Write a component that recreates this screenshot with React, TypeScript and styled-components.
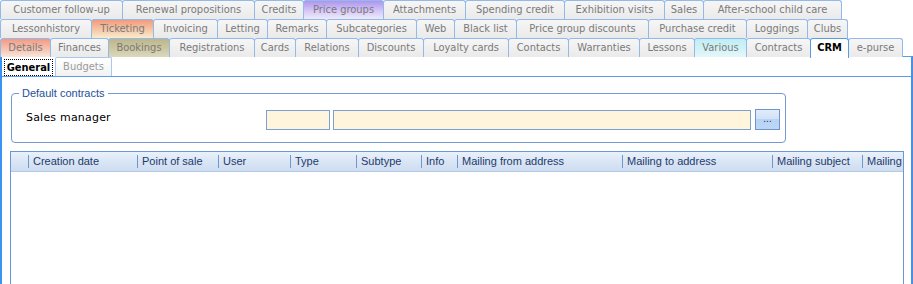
import React from "react";
import styled, { createGlobalStyle, css } from "styled-components";

const Global = createGlobalStyle`
  html, body { margin: 0; padding: 0; background: #ffffff; }
  body { font-family: "Liberation Sans", Arial, sans-serif; }
  * { box-sizing: border-box; }
`;

type Tone = "plain" | "purple" | "orange" | "salmon" | "olive" | "cyan";

const tones: Record<Tone, string> = {
  plain: "linear-gradient(#f6f6f6, #eaeaea)",
  purple: "linear-gradient(#ae94ef, #d8ccf6 60%, #efeafb)",
  orange: "linear-gradient(#f29a7e, #f6c7a6 55%, #f8ecd0)",
  salmon: "linear-gradient(#f19a84, #f6c6b4 60%, #f8e6dc)",
  olive: "linear-gradient(#bdb68c, #cfc9a4 60%, #dcd8bd)",
  cyan: "linear-gradient(#bfeef3, #d4f3f6 60%, #e6f7f9)",
};

const Screen = styled.div`
  width: 913px;
  height: 284px;
  overflow: hidden;
  display: flex;
  flex-direction: column;
  background: #ffffff;
`;

const TabRow = styled.div<{ $front?: boolean }>`
  display: flex;
  height: 19px;
  flex: none;
  position: relative;
  z-index: ${(p) => (p.$front ? 2 : "auto")};
`;

const Tab = styled.div<{ $w: number; $tone?: Tone; $active?: boolean }>`
  width: ${(p) => p.$w}px;
  flex: none;
  height: 19px;
  margin-left: -1px;
  &:first-child { margin-left: 0; }
  border: 1px solid #93b9e8;
  border-bottom: none;
  border-radius: 3px 3px 0 0;
  background: ${(p) => tones[p.$tone ?? "plain"]};
  color: #7a7a7a;
  font-family: "DejaVu Sans Condensed", "Liberation Sans", sans-serif;
  font-size: 11px;
  line-height: 18px;
  text-align: center;
  white-space: nowrap;
  overflow: hidden;
  ${(p) =>
    p.$active &&
    css`
      background: #ffffff;
      color: #000000;
      font-weight: bold;
      height: 20px;
      position: relative;
      z-index: 2;
      border-color: #5a9be6;
    `}
`;

const Panel = styled.div`
  flex: 1;
  margin-top: -1px;
  border-top: 1px solid #5d9ce8;
  border-left: 2px solid #3a92f2;
  border-right: 2px solid #4a90e2;
  display: flex;
  flex-direction: column;
  position: relative;
  z-index: 1;
`;

const InnerTabs = styled.div`
  display: flex;
  height: 19px;
  flex: none;
`;

const InnerTab = styled.div<{ $w: number; $active?: boolean }>`
  width: ${(p) => p.$w}px;
  flex: none;
  height: 19px;
  border: 1px solid #a9c8ee;
  border-bottom: none;
  border-radius: 2px 2px 0 0;
  font-family: "DejaVu Sans Condensed", "Liberation Sans", sans-serif;
  font-size: 11px;
  line-height: 17px;
  text-align: center;
  color: #9a9a9a;
  background: linear-gradient(#ffffff, #f2f2f2);
  ${(p) =>
    p.$active &&
    css`
      background: #ffffff;
      color: #000000;
      font-weight: bold;
      border-color: #ffffff;
      padding: 1px 1px 0;
    `}
`;

const FocusLabel = styled.span`
  display: block;
  border: 1px dotted #000000;
  line-height: 15px;
`;

const Page = styled.div`
  flex: 1;
  border-top: 1px solid #5d9ce8;
  display: flex;
  flex-direction: column;
  padding: 16px 0 0 9px;
`;

const GroupBox = styled.div`
  position: relative;
  width: 775px;
  height: 50px;
  flex: none;
  border: 1px solid #7399d4;
  border-radius: 4px;
  display: flex;
  align-items: center;
  padding: 0 0 0 14px;
`;

const Legend = styled.span`
  position: absolute;
  left: 7px;
  top: -8px;
  padding: 0 3px;
  background: #ffffff;
  color: #1d4f9a;
  font-family: "Liberation Sans", Arial, sans-serif;
  font-size: 11px;
  line-height: 14px;
`;

const FieldRow = styled.div`
  display: flex;
  align-items: center;
  margin-top: 3px;
`;

const Label = styled.span`
  width: 240px;
  flex: none;
  font-family: "DejaVu Sans", Verdana, sans-serif;
  font-size: 11px;
  letter-spacing: 0.2px;
  color: #000000;
  margin-top: -4px;
`;

const Input = styled.div<{ $w: number; $gap?: number }>`
  width: ${(p) => p.$w}px;
  height: 20px;
  flex: none;
  margin-left: ${(p) => p.$gap ?? 0}px;
  background: #fff5dc;
  border: 1px solid #7d9fd0;
`;

const DotsButton = styled.div`
  width: 25px;
  height: 21px;
  flex: none;
  margin-left: 4px;
  margin-top: -1px;
  border: 1px solid #7194cc;
  background: linear-gradient(#e1ecf9 0%, #d2e3f7 45%, #b8d3f5 50%, #bcd6f6 100%);
  color: #1a2f55;
  font-family: "Liberation Sans", Arial, sans-serif;
  font-size: 10px;
  line-height: 18px;
  text-align: center;
`;

const Grid = styled.div`
  margin-top: 8px;
  width: 894px;
  flex: 1;
  margin-left: -1px;
  border: 1px solid #6b97d6;
  border-bottom: none;
  display: flex;
  flex-direction: column;
`;

const HeaderRow = styled.div`
  display: flex;
  height: 20px;
  flex: none;
  background: linear-gradient(#eaf1fa, #dae6f5 50%, #cddcf0);
  border-bottom: 1px solid #b5c9e6;
  overflow: hidden;
`;

const HeaderCell = styled.div<{ $w: number }>`
  width: ${(p) => p.$w}px;
  flex: none;
  position: relative;
  padding-left: 4px;
  font-family: "Liberation Sans", Arial, sans-serif;
  font-size: 11px;
  line-height: 19px;
  color: #1e3a6b;
  white-space: nowrap;
  overflow: hidden;
  &::after {
    content: "";
    position: absolute;
    right: 0;
    top: 3px;
    bottom: 3px;
    width: 1px;
    background: #7096d0;
  }
`;

const LastCell = styled(HeaderCell)`
  &::after { display: none; }
`;

const GridBody = styled.div`
  flex: 1;
  background: #ffffff;
`;

const row1: [string, number, Tone?][] = [
  ["Customer follow-up", 123],
  ["Renewal propositions", 133],
  ["Credits", 50],
  ["Price groups", 81, "purple"],
  ["Attachments", 83],
  ["Spending credit", 100],
  ["Exhibition visits", 101],
  ["Sales", 40],
  ["After-school child care", 139],
];

const row2: [string, number, Tone?][] = [
  ["Lessonhistory", 92],
  ["Ticketing", 63, "orange"],
  ["Invoicing", 65],
  ["Letting", 51],
  ["Remarks", 60],
  ["Subcategories", 91],
  ["Web", 39],
  ["Black list", 63],
  ["Price group discounts", 133],
  ["Purchase credit", 99],
  ["Loggings", 62],
  ["Clubs", 41],
];

const row3: [string, number, Tone?][] = [
  ["Details", 51, "salmon"],
  ["Finances", 59],
  ["Bookings", 62, "olive"],
  ["Registrations", 86],
  ["Cards", 42],
  ["Relations", 64],
  ["Discounts", 66],
  ["Loyalty cards", 86],
  ["Contacts", 61],
  ["Warranties", 72],
  ["Lessons", 56],
  ["Various", 53, "cyan"],
  ["Contracts", 65],
  ["CRM", 39],
  ["e-purse", 55],
];

const columns: [string, number][] = [
  ["", 18],
  ["Creation date", 109],
  ["Point of sale", 81],
  ["User", 72],
  ["Type", 66],
  ["Subtype", 65],
  ["Info", 36],
  ["Mailing from address", 165],
  ["Mailing to address", 150],
  ["Mailing subject", 90],
];

export default function App() {
  return (
    <Screen>
      <Global />
      {[row1, row2].map((row, i) => (
        <TabRow key={i}>
          {row.map(([t, w, tone]) => (
            <Tab key={t} $w={w} $tone={tone}>
              {t}
            </Tab>
          ))}
        </TabRow>
      ))}
      <TabRow $front>
        {row3.map(([t, w, tone]) => (
          <Tab key={t} $w={w} $tone={tone} $active={t === "CRM"}>
            {t}
          </Tab>
        ))}
      </TabRow>
      <Panel>
        <InnerTabs>
          <InnerTab $w={53} $active>
            <FocusLabel>General</FocusLabel>
          </InnerTab>
          <InnerTab $w={57}>Budgets</InnerTab>
        </InnerTabs>
        <Page>
          <GroupBox>
            <Legend>Default contracts</Legend>
            <FieldRow>
              <Label>Sales manager</Label>
              <Input $w={64} />
              <Input $w={418} $gap={3} />
              <DotsButton>...</DotsButton>
            </FieldRow>
          </GroupBox>
          <Grid>
            <HeaderRow>
              {columns.map(([t, w], i) => (
                <HeaderCell key={i} $w={w}>
                  {t}
                </HeaderCell>
              ))}
              <LastCell $w={60}>Mailing</LastCell>
            </HeaderRow>
            <GridBody />
          </Grid>
        </Page>
      </Panel>
    </Screen>
  );
}
